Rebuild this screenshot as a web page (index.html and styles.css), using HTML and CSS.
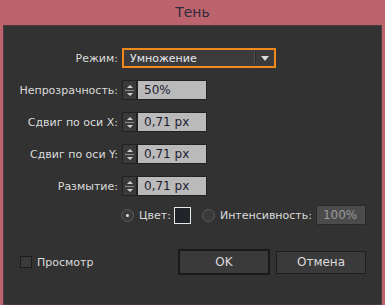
FILE: index.html
```html
<!DOCTYPE html>
<html>
    <head>
        <title>Тень</title>
        <link rel="stylesheet" href="styles.css">
    </head>
    <body>
        <div class="window">
            <div class="titlebar">Тень</div>

            <div class="dialog">
                <div class="form">
                    <div class="label">Режим:</div>
                    <div class="select">
                        <span class="select_text">Умножение</span>
                        <span class="select_sep"></span>
                        <span class="select_arrow"></span>
                    </div>

                    <div class="label">Непрозрачность:</div>
                    <div class="field">
                        <div class="spinner"><span class="up"></span><span class="line"></span><span class="down"></span></div>
                        <div class="input">50%</div>
                    </div>

                    <div class="label">Сдвиг по оси X:</div>
                    <div class="field">
                        <div class="spinner"><span class="up"></span><span class="line"></span><span class="down"></span></div>
                        <div class="input">0,71 px</div>
                    </div>

                    <div class="label">Сдвиг по оси Y:</div>
                    <div class="field">
                        <div class="spinner"><span class="up"></span><span class="line"></span><span class="down"></span></div>
                        <div class="input">0,71 px</div>
                    </div>

                    <div class="label">Размытие:</div>
                    <div class="field">
                        <div class="spinner"><span class="up"></span><span class="line"></span><span class="down"></span></div>
                        <div class="input">0,71 px</div>
                    </div>
                </div>

                <div class="radio_row">
                    <span class="radio checked"></span>
                    <span class="radio_label">Цвет:</span>
                    <span class="swatch"></span>
                    <span class="radio second"></span>
                    <span class="radio_label">Интенсивность:</span>
                    <span class="input disabled">100%</span>
                </div>

                <div class="bottom_row">
                    <div class="preview">
                        <span class="checkbox"></span>
                        <span>Просмотр</span>
                    </div>
                    <div class="buttons">
                        <div class="button default">OK</div>
                        <div class="button">Отмена</div>
                    </div>
                </div>
            </div>
        </div>
    </body>
</html>
```

FILE: styles.css
```css
body
{
    margin:0;
    font-family:"DejaVu Sans", sans-serif;
    font-size:11px;
}

.window
{
    width:385px;
    height:305px;
    background-color:#bc636e;
    display:flex;
    flex-direction:column;
}

.titlebar
{
    height:25px;
    line-height:25px;
    text-align:center;
    font-size:14px;
    color:#2c2c3a;
}

.dialog
{
    margin:0 3px;
    height:275px;
    background-color:#323232;
    border:1px solid #4a3c3e;
    color:#dcdcdc;
    padding-top:22px;
}

.form
{
    display:grid;
    grid-template-columns:114px auto;
    column-gap:4px;
    row-gap:12px;
    align-items:center;
}

.label
{
    text-align:right;
}

.select
{
    width:150px;
    height:16px;
    border:2px solid #f08a1c;
    background-color:#3b3b3b;
    display:flex;
    align-items:center;
    color:#e8e8f0;
}

.select_text
{
    flex:1;
    padding-left:6px;
}

.select_sep
{
    width:1px;
    height:14px;
    background-color:#555555;
    border-right:1px solid #2a2a2a;
    margin-right:5px;
}

.select_arrow
{
    width:0;
    height:0;
    border-left:4px solid transparent;
    border-right:4px solid transparent;
    border-top:5px solid #d8d8d8;
    margin-right:5px;
}

.field
{
    display:flex;
    height:20px;
}

.spinner
{
    width:13px;
    height:18px;
    border:1px solid #222222;
    background-color:#3a3a3a;
    display:flex;
    flex-direction:column;
    align-items:center;
    justify-content:center;
    gap:2px;
}

.up
{
    width:0;
    height:0;
    border-left:3px solid transparent;
    border-right:3px solid transparent;
    border-bottom:3px solid #cfcfcf;
}

.line
{
    width:9px;
    height:1px;
    background-color:#8a8a8a;
}

.down
{
    width:0;
    height:0;
    border-left:3px solid transparent;
    border-right:3px solid transparent;
    border-top:3px solid #cfcfcf;
}

.input
{
    width:62px;
    height:18px;
    line-height:18px;
    border:1px solid #222222;
    background-color:#bababa;
    color:#1c1c30;
    padding-left:6px;
    font-size:12px;
}

.radio_row
{
    display:flex;
    align-items:center;
    height:20px;
    margin-top:9px;
    padding-left:117px;
}

.radio
{
    width:11px;
    height:11px;
    border:1px solid #5a5a5a;
    border-radius:50%;
    background-color:#3a3a3a;
    display:flex;
    align-items:center;
    justify-content:center;
}

.radio.checked::after
{
    content:"";
    width:3px;
    height:3px;
    border-radius:50%;
    background-color:#e0e0e0;
}

.radio.second
{
    margin-left:11px;
}

.radio_label
{
    margin-left:5px;
    margin-right:3px;
}

.swatch
{
    width:15px;
    height:15px;
    border:1px solid #e8e8e8;
    background-color:#212429;
}

.input.disabled
{
    width:42px;
    background-color:#4b4b4b;
    border-color:#2a2a2a;
    color:#9a9a9a;
    margin-left:1px;
}

.bottom_row
{
    display:flex;
    justify-content:space-between;
    align-items:center;
    margin-top:24px;
    padding:0 15px 0 16px;
}

.preview
{
    display:flex;
    align-items:center;
    gap:5px;
}

.checkbox
{
    width:10px;
    height:10px;
    border:1px solid #1c1c1c;
    background-color:#3a3a3a;
}

.buttons
{
    display:flex;
    align-items:center;
    gap:6px;
}

.button
{
    width:88px;
    height:21px;
    line-height:21px;
    text-align:center;
    border:1px solid #1e1e1e;
    background-color:#3a3a3a;
    font-size:12px;
}

.button.default
{
    width:88px;
    height:22px;
    line-height:22px;
    border:2px solid #1a1a1a;
}
```
